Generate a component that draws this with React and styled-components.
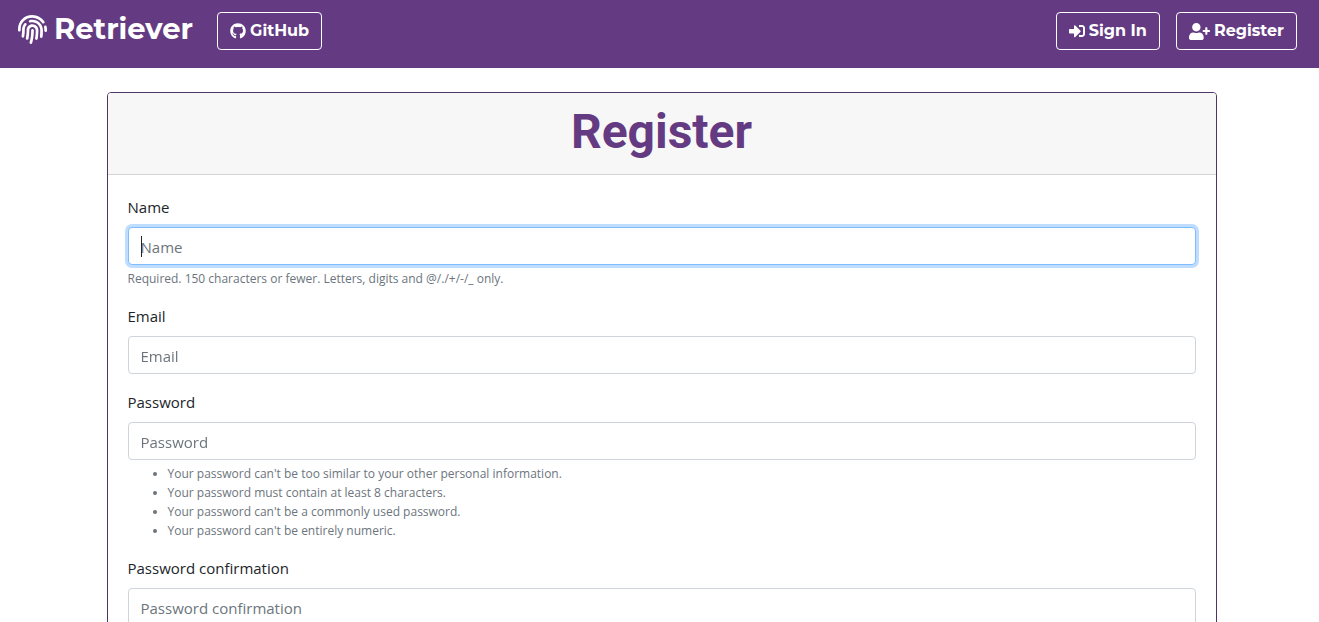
import React from "react";
import styled, { createGlobalStyle } from "styled-components";
import { FaFingerprint, FaGithub, FaSignInAlt, FaUserPlus } from "react-icons/fa";

const purple = "#643b82";

const GlobalStyle = createGlobalStyle`
  *, *::before, *::after { box-sizing: border-box; }
  body {
    margin: 0;
    background: #fff;
    color: #212529;
    font-family: "Segoe UI", "Open Sans", "Noto Sans", sans-serif;
    font-size: 15px;
    line-height: 24px;
  }
`;

const Navbar = styled.nav`
  display: flex;
  align-items: center;
  justify-content: space-between;
  height: 68px;
  padding: 0 22px 6px 18px;
  background: ${purple};
  font-family: Montserrat, Inter, sans-serif;
  font-weight: 700;
`;

const NavGroup = styled.div`
  display: flex;
  align-items: center;
  gap: ${({ $gap }) => $gap}px;
`;

const Brand = styled.a`
  display: flex;
  align-items: center;
  gap: 7px;
  color: #fff;
  font-size: 29px;
  line-height: 36px;
  text-decoration: none;
  padding-bottom: 4px;
  svg { width: 29px; height: 29px; }
`;

const NavButton = styled.a`
  display: flex;
  align-items: center;
  justify-content: center;
  gap: 4px;
  height: 38px;
  padding: 0 12px;
  border: 1px solid #fff;
  border-radius: 4px;
  color: #fff;
  font-size: 16px;
  text-decoration: none;
  white-space: nowrap;
`;

const Container = styled.main`
  max-width: 1140px;
  margin: 0 auto;
  padding: 24px 13px 24px 17px;
`;

const Card = styled.section`
  border: 1px solid #4f3565;
  border-radius: 4px;
  background: #fff;
`;

const CardHeader = styled.header`
  padding: 10px 20px 14px;
  border-bottom: 1px solid #d4d4d6;
  border-radius: 3px 3px 0 0;
  background: #f7f7f7;
`;

const Title = styled.h1`
  margin: 0;
  color: ${purple};
  font-family: Roboto, sans-serif;
  font-size: 48px;
  font-weight: 700;
  line-height: 57px;
  text-align: center;
`;

const Form = styled.form`
  display: flex;
  flex-direction: column;
  gap: 16px;
  padding: 20px;
`;

const Field = styled.div`
  display: flex;
  flex-direction: column;
`;

const Label = styled.label`
  margin-bottom: 8px;
`;

const Control = styled.div`
  position: relative;
  display: flex;
`;

const Caret = styled.span`
  position: absolute;
  top: 9px;
  left: 13px;
  width: 1px;
  height: 21px;
  background: #212529;
  pointer-events: none;
  visibility: hidden;
  input:focus:placeholder-shown + & { visibility: visible; }
`;

const Input = styled.input`
  width: 100%;
  height: 38px;
  padding: 2px 12px 0;
  border: 1px solid #ced4da;
  border-radius: 4px;
  background: #fff;
  color: #495057;
  font: inherit;
  &::placeholder { color: #6c757d; opacity: 1; }
  &:placeholder-shown { caret-color: transparent; }
  &:focus {
    outline: 0;
    border-color: #80bdff;
    box-shadow: 0 0 0 3px #bfdeff;
  }
`;

const Help = styled.small`
  margin-top: 4px;
  color: #6c757d;
  font-size: 12px;
  line-height: 19px;
`;

const Rules = styled.ul`
  margin: 4px 0 0;
  padding-left: 40px;
  color: #6c757d;
  font-size: 12px;
  line-height: 19px;
`;

function TextField({ id, label, type = "text", autoFocus, children }) {
  return (
    <Field>
      <Label htmlFor={id}>{label}</Label>
      <Control>
        <Input id={id} name={id} type={type} placeholder={label} autoFocus={autoFocus} />
        <Caret aria-hidden="true" />
      </Control>
      {children}
    </Field>
  );
}

const passwordRules = [
  "Your password can't be too similar to your other personal information.",
  "Your password must contain at least 8 characters.",
  "Your password can't be a commonly used password.",
  "Your password can't be entirely numeric.",
];

export default function App() {
  return (
    <>
      <GlobalStyle />
      <Navbar>
        <NavGroup $gap={24}>
          <Brand href="#"><FaFingerprint />Retriever</Brand>
          <NavButton href="#github"><FaGithub />GitHub</NavButton>
        </NavGroup>
        <NavGroup $gap={16}>
          <NavButton href="#sign-in"><FaSignInAlt />Sign In</NavButton>
          <NavButton href="#register"><FaUserPlus size={21} />Register</NavButton>
        </NavGroup>
      </Navbar>
      <Container>
        <Card>
          <CardHeader>
            <Title>Register</Title>
          </CardHeader>
          <Form>
            <TextField id="name" label="Name" autoFocus>
              <Help>Required. 150 characters or fewer. Letters, digits and @/./+/-/_ only.</Help>
            </TextField>
            <TextField id="email" label="Email" type="email" />
            <TextField id="password" label="Password" type="password">
              <Rules>
                {passwordRules.map((rule) => <li key={rule}>{rule}</li>)}
              </Rules>
            </TextField>
            <TextField id="confirmation" label="Password confirmation" type="password" />
          </Form>
        </Card>
      </Container>
    </>
  );
}
